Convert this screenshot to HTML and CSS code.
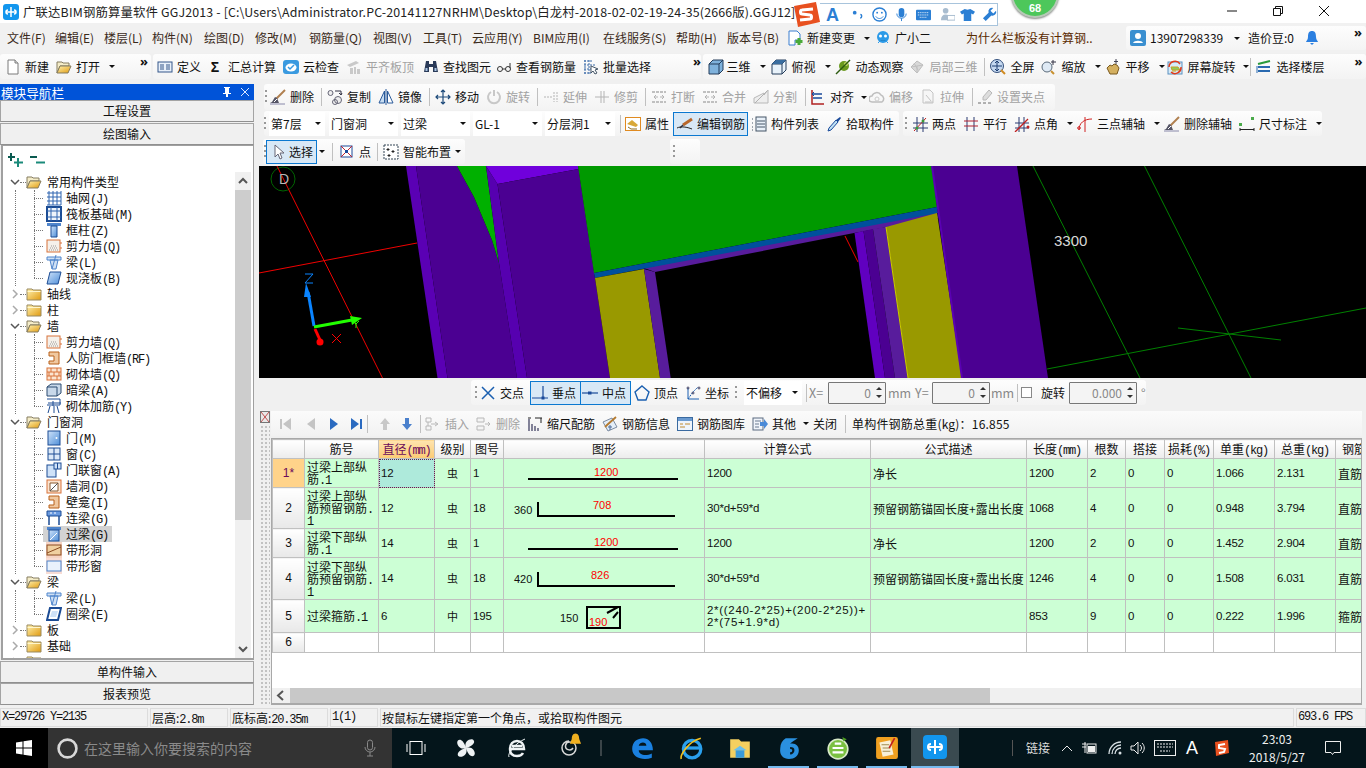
FILE: index.html
```html
<!DOCTYPE html>
<html lang="zh-CN">
<head>
<meta charset="utf-8">
<title>GGJ2013</title>
<link rel="stylesheet" href="styles.css">
</head>
<body>
<svg class="defs" width="0" height="0" aria-hidden="true">
<defs>
<linearGradient id="gf" x1="0" y1="0" x2="1" y2="1"><stop offset="0" stop-color="#fff2b0"/><stop offset="1" stop-color="#e09a10"/></linearGradient>
<linearGradient id="gb" x1="0" y1="0" x2="1" y2="1"><stop offset="0" stop-color="#cfe3fa"/><stop offset="1" stop-color="#4f8fd8"/></linearGradient>
<symbol id="doc" viewBox="0 0 16 16"><path d="M3 1h7l3 3v11H3z" fill="#fff" stroke="#7a7a7a"/><path d="M10 1v3h3" fill="#ddd" stroke="#7a7a7a"/></symbol>
<symbol id="fopen" viewBox="0 0 16 16"><path d="M1 3h5l1 1h6v3H4l-3 7z" fill="#f4ecc8" stroke="#857c60"/><path d="M4 7h11l-3 7H1z" fill="url(#gf)" stroke="#857c60"/></symbol>
<symbol id="fclosed" viewBox="0 0 16 16"><path d="M1 3h5l1 1h8v10H1z" fill="url(#gf)" stroke="#9a8a60"/><path d="M1.500 5.500h13" stroke="#fff6cc"/></symbol>
<symbol id="def" viewBox="0 0 16 16"><rect x="1" y="3" width="14" height="10" fill="#e8f0fa" stroke="#34578a"/><path d="M3 6h4M3 8h4M3 10h4M9 6h4M9 8h4M9 10h4" stroke="#34578a"/></symbol>
<symbol id="cloud" viewBox="0 0 16 16"><rect x="0" y="1" width="16" height="14" rx="3" fill="#3a9ae0"/><ellipse cx="8" cy="8.500" rx="5.500" ry="4" fill="#fff"/><path d="M5 8l2 2 4-4" stroke="#3a9ae0" stroke-width="1.500" fill="none"/></symbol>
<symbol id="plate" viewBox="0 0 16 16"><path d="M1 6l9-4 3 2-9 4zM4 9h3v6H4zM8 8h2v7H8zM11 10h3v5h-3z" fill="#c9c9c9"/></symbol>
<symbol id="binoc" viewBox="0 0 16 16"><path d="M3 2h3v3h4V2h3l2 11H10V8H6v5H1z" fill="#2a3a58"/><path d="M2.500 9h2v3h-2zM11.500 9h2v3h-2z" fill="#a8c4e4"/></symbol>
<symbol id="glass" viewBox="0 0 16 16"><circle cx="4" cy="10" r="2.500" fill="none" stroke="#333"/><circle cx="12" cy="10" r="2.500" fill="none" stroke="#333"/><path d="M6.500 10h3M14 9V4" stroke="#333"/></symbol>
<symbol id="batch" viewBox="0 0 16 16"><path d="M1 2h9M1 6h11M1 10h7M1 14h7M2 1v14M6 1v14" stroke="#3a6aa8" stroke-dasharray="2 1"/><path d="M8 7l7 3-3 1 2 3-2 1-2-3-2 2z" fill="#fff" stroke="#456"/></symbol>
<symbol id="cube" viewBox="0 0 16 16"><path d="M1 5l4-4h10v10l-4 4H1z" fill="#7fb2dc" stroke="#243d5a"/><path d="M1 5h10v10M11 5l4-4" fill="none" stroke="#243d5a"/></symbol>
<symbol id="cube2" viewBox="0 0 16 16"><path d="M1 5l4-4h10v10l-4 4H1z" fill="#e8f2fa" stroke="#243d5a"/><path d="M1 5h10v10M11 5l4-4" fill="none" stroke="#243d5a"/><path d="M5 1h10l-4 4H1z" fill="#3a6ea0"/></symbol>
<symbol id="orbit" viewBox="0 0 16 16"><circle cx="9" cy="7" r="5" fill="#6a9a20"/><circle cx="11" cy="5" r="2" fill="#c8d868"/><path d="M1 15L15 1" stroke="#2c5a10" stroke-width="1.500"/></symbol>
<symbol id="cubeg" viewBox="0 0 16 16"><path d="M8 2l6 4-6 8-6-6z" fill="#d8d8d8" stroke="#bdbdbd"/><path d="M2 8l6-1 6-1M8 7v7M5 4l4 7" stroke="#c0c0c0" fill="none"/></symbol>
<symbol id="full" viewBox="0 0 16 16"><circle cx="7" cy="7" r="6.500" fill="#c4d8f0" stroke="#33507c"/><path d="M7 2v10M2 7h10M5 4l2-2 2 2M5 10l2 2 2-2" stroke="#1d3d70" fill="none"/><path d="M11 11l4 4" stroke="#d08a20" stroke-width="2"/></symbol>
<symbol id="zoom" viewBox="0 0 16 16"><circle cx="6" cy="8" r="5" fill="#dfeaf5" stroke="#5a6a7a"/><path d="M10 12l3 3" stroke="#c89030" stroke-width="2"/><path d="M12 1v5M10 3h5" stroke="#334"/></symbol>
<symbol id="hand" viewBox="0 0 16 16"><path d="M2 9l3-3 2 1 2-2 3 1 2 3-2 6H5z" fill="#d4b060" stroke="#7a5a20"/><path d="M11 0v5M9 2.500h4" stroke="#445"/></symbol>
<symbol id="rot" viewBox="0 0 16 16"><rect x="1" y="3" width="14" height="12" fill="#d8ecf8" stroke="#5a90c0"/><path d="M4 8h7l2 3H5zM5 12h4" fill="#8ccc60" stroke="#caa020"/><path d="M2 8a6 6 0 0 1 11-3M14 8a6 6 0 0 1-10 5" fill="none" stroke="#e03a1a" stroke-width="1.500"/></symbol>
<symbol id="layer" viewBox="0 0 16 16"><path d="M2 5l12-3" stroke="#2a9a3a" stroke-width="2"/><path d="M2 8h12" stroke="#2a6ab0" stroke-width="2"/><path d="M2 12h12" stroke="#2a6ab0" stroke-width="2"/><path d="M1 7v7" stroke="#2a6ab0"/></symbol>
<symbol id="brush" viewBox="0 0 16 16"><path d="M15 1L6 10" stroke="#b08050" stroke-width="2"/><path d="M7 9l-2-1-3 5-2 1h9z" fill="#556" /><path d="M4 13l3-3" stroke="#fff"/><path d="M0 15h15" stroke="#88a"/></symbol>
<symbol id="copy" viewBox="0 0 16 16"><circle cx="3.500" cy="4" r="2.500" fill="#eee" stroke="#667"/><circle cx="11" cy="11" r="3.500" fill="#eee" stroke="#667"/><circle cx="8" cy="13" r="2.500" fill="none" stroke="#667"/><path d="M8 2h6v4M12 4l2 2 1-2" stroke="#334" fill="none"/></symbol>
<symbol id="mirror" viewBox="0 0 16 16"><path d="M6.500 2L1 14h5.500z" fill="#c8ddf2" stroke="#2a5a9a"/><path d="M9.500 2L15 14H9.500z" fill="#fff" stroke="#2a5a9a"/><path d="M8 0v16" stroke="#2a5a9a"/></symbol>
<symbol id="move" viewBox="0 0 16 16"><path d="M8 1v14M1 8h14M6 3l2-2 2 2M6 13l2 2 2-2M3 6L1 8l2 2M13 6l2 2-2 2" stroke="#1d4a7a" stroke-width="1.200" fill="none"/></symbol>
<symbol id="rotg" viewBox="0 0 16 16"><path d="M5 3a6 6 0 1 0 6 0" fill="none" stroke="#c8c8c8" stroke-width="2"/><path d="M8 1v6" stroke="#c8c8c8" stroke-width="2"/></symbol>
<symbol id="extg" viewBox="0 0 16 16"><path d="M1 8h8M11 3v10M14 3v10" stroke="#b4b4b4" stroke-dasharray="2 1"/></symbol>
<symbol id="trimg" viewBox="0 0 16 16"><path d="M1 8h14M7 2v12M10 2v12" stroke="#b4b4b4"/></symbol>
<symbol id="breakg" viewBox="0 0 16 16"><path d="M1 3h14M1 13h14" stroke="#c0c0c0" stroke-width="2" stroke-dasharray="3 1"/><path d="M3 8h4M9 8h4M5 6l-2 2 2 2M11 6l2 2-2 2" stroke="#b4b4b4" fill="none"/></symbol>
<symbol id="splitg" viewBox="0 0 16 16"><path d="M1 14V9l10-5v2l4-5v13z" fill="#eee" stroke="#b8b8b8"/><path d="M2 14L14 2" stroke="#b0b0b0"/></symbol>
<symbol id="align" viewBox="0 0 16 16"><path d="M2 1v14h12" stroke="#b02020" stroke-width="1.500" fill="none"/><path d="M3 5h9M3 9h9" stroke="#1a4a9a" stroke-width="1.500"/><path d="M4 3L2 5l2 2" stroke="#1a4a9a" fill="none"/></symbol>
<symbol id="offg" viewBox="0 0 16 16"><path d="M3 13a3 3 0 0 1 0-6 5 5 0 0 1 9-1 4 4 0 0 1 1 7z" fill="none" stroke="#bfbfbf" stroke-width="1.500"/><circle cx="8" cy="10" r="2" fill="none" stroke="#ccc"/></symbol>
<symbol id="stretchg" viewBox="0 0 16 16"><path d="M3 1h7l3 3v10H3z" fill="#f6f6f6" stroke="#c4c4c4"/><path d="M6 6l5 6M5 13h8" stroke="#c4c4c4"/></symbol>
<symbol id="gripg" viewBox="0 0 16 16"><path d="M12 1l3 3-6 7H6V8z" fill="#ddd" stroke="#b8b8b8"/><path d="M1 14h3M6 14h3M11 14h3" stroke="#b0b0b0" stroke-width="2"/></symbol>
<symbol id="attr" viewBox="0 0 16 16"><rect x="0.500" y="1.500" width="15" height="13" fill="#fff" stroke="#e08a20"/><path d="M2 8l5-4 6 5-2 2z" fill="#d8a838"/><path d="M3 11l3 2h6" stroke="#8a6a20" fill="none"/></symbol>
<symbol id="pen" viewBox="0 0 16 16"><path d="M15 3L6 9" stroke="#b8672a" stroke-width="3"/><path d="M6 9l-3 3" stroke="#334" stroke-width="1.500"/><path d="M0 12c4-2 10-1 15 1" stroke="#222" fill="none"/></symbol>
<symbol id="list" viewBox="0 0 16 16"><path d="M1 3h2M1 7h2M1 11h2M1 14h2" stroke="#456" stroke-dasharray="1 1"/><rect x="5" y="1" width="10" height="14" fill="#e8f0f8" stroke="#456"/><path d="M6 5h8M6 8h8M6 11h8" stroke="#456"/></symbol>
<symbol id="pick" viewBox="0 0 16 16"><path d="M14 1l1 1-3 4-2-2z" fill="#1a4a9a"/><path d="M10 4l2 2-7 8-3 1 1-3z" fill="#bfe0f4" stroke="#1a4a9a"/></symbol>
<symbol id="twop" viewBox="0 0 16 16"><path d="M1 7h15M1 12h15M5 1v15M11 1v15" stroke="#2a3a70"/><path d="M2 15L14 2" stroke="#c02020"/><circle cx="5" cy="12" r="1.500" fill="#3a9a3a"/><circle cx="11" cy="5" r="1.500" fill="#3a9a3a"/></symbol>
<symbol id="para" viewBox="0 0 16 16"><path d="M4 1v14M11 1v14" stroke="#2a3a70"/><path d="M1 5h14M1 10h14" stroke="#b02030"/></symbol>
<symbol id="angl" viewBox="0 0 16 16"><path d="M1 7h14M1 12h14M5 1v15M10 1v15" stroke="#2a3a70"/><path d="M1 16L14 3" stroke="#c02020" stroke-width="1.300"/><circle cx="14" cy="11" r="1.500" fill="#c02020"/></symbol>
<symbol id="threep" viewBox="0 0 16 16"><path d="M2 14c0-7 5-11 13-11M8 1v15" stroke="#d02020" fill="none"/><circle cx="2" cy="12" r="1.300" fill="none" stroke="#d02020"/></symbol>
<symbol id="dim" viewBox="0 0 16 16"><path d="M1 12v3M15 12v3M1 13.500h14" stroke="#222" fill="none"/><rect x="0" y="7" width="3" height="3" fill="#4aaa4a"/><rect x="12" y="1" width="3" height="3" fill="#4aaa4a"/><path d="M6 13.500h1M9 13.500h1" stroke="#222"/></symbol>
<symbol id="cursor" viewBox="0 0 16 16"><path d="M4 1v12l3-3 2 5 2-1-2-5h4z" fill="#fff" stroke="#667"/></symbol>
<symbol id="pt" viewBox="0 0 16 16"><rect x="2" y="2" width="11" height="11" fill="#fff" stroke="#1a4a9a"/><path d="M2 2l11 11M13 2L2 13" stroke="#c02030"/><rect x="6" y="6" width="3" height="3" fill="#1a4a9a"/></symbol>
<symbol id="smart" viewBox="0 0 16 16"><rect x="1" y="1" width="14" height="14" fill="#fff" stroke="#345" stroke-dasharray="2 1"/><path d="M5 4v3M3.500 5.500h3M10 6v3M8.500 7.500h3M6 10v3M4.500 11.500h3" stroke="#222"/></symbol>
<symbol id="cross" viewBox="0 0 16 16"><path d="M2 2l12 12M14 2L2 14" stroke="#1a5fb0" stroke-width="1.500"/></symbol>
<symbol id="perp" viewBox="0 0 16 16"><path d="M0 13h16M11 1v12" stroke="#1a4a9a" stroke-width="1.200"/><rect x="9.500" y="11.500" width="3" height="3" fill="#1a4a9a"/></symbol>
<symbol id="mid" viewBox="0 0 16 16"><path d="M0 8h16" stroke="#1a4a9a" stroke-width="1.200"/><rect x="6" y="6.500" width="3.500" height="3" fill="#1a4a9a"/></symbol>
<symbol id="vert" viewBox="0 0 16 16"><path d="M8 1l7 6-3 8H4L1 7z" fill="none" stroke="#1a5fb0" stroke-width="1.400"/></symbol>
<symbol id="coord" viewBox="0 0 16 16"><path d="M3 3v11h11" stroke="#1a5fb0" fill="none"/><path d="M3 14l5-7 5-5" stroke="#1a5fb0" stroke-dasharray="2 1" fill="none"/><circle cx="3" cy="3" r="1" fill="none" stroke="#446"/><circle cx="14" cy="3" r="1" fill="none" stroke="#446"/><circle cx="8" cy="8" r="1" fill="none" stroke="#446"/></symbol>
<symbol id="fst" viewBox="0 0 16 16"><path d="M3 3h2v10H3zM14 2v12L6 8z" fill="#c4c4c4"/></symbol>
<symbol id="prv" viewBox="0 0 16 16"><path d="M12 2v12L4 8z" fill="#c4c4c4"/></symbol>
<symbol id="nxt" viewBox="0 0 16 16"><path d="M4 2v12l8-6z" fill="#2a6ac0"/></symbol>
<symbol id="lst" viewBox="0 0 16 16"><path d="M2 2v12l8-6zM11 3h2v10h-2z" fill="#2a6ac0"/></symbol>
<symbol id="upg" viewBox="0 0 16 16"><path d="M8 2l5 6h-3v6H6V8H3z" fill="#c8c8c8"/></symbol>
<symbol id="dnb" viewBox="0 0 16 16"><path d="M8 14l5-6h-3V2H6v6H3z" fill="#4a80cc"/></symbol>
<symbol id="insg" viewBox="0 0 16 16"><path d="M1 2h5v4H1zM1 10h5v4H1z" fill="none" stroke="#b8b8b8"/><path d="M6 8h6M10 6l3 2-3 2M3 6v4" stroke="#b8b8b8" fill="none"/></symbol>
<symbol id="delg" viewBox="0 0 16 16"><path d="M1 2h7v4H1zM1 10h7v4H1z" fill="#f4f4f4" stroke="#b8b8b8"/><path d="M9 8h5M12 6l2 2-2 2" stroke="#b8b8b8" fill="none"/></symbol>
<symbol id="scale" viewBox="0 0 16 16"><path d="M2 3v12M5 8v7M8 10v5M11 12v3" stroke="#446" stroke-width="1.300"/><path d="M1 2h3M8 2h7M14 2v5" stroke="#222" fill="none"/></symbol>
<symbol id="info" viewBox="0 0 16 16"><path d="M1 6l9-4 5 9-9 4z" fill="#e4eef8" stroke="#7a8aa0"/><path d="M14 1L5 9l-2 2" stroke="#b47a30" stroke-width="1.800"/><path d="M8 9v5M6 11h4" stroke="#4a6a9a"/></symbol>
<symbol id="lib" viewBox="0 0 16 16"><rect x="0.500" y="1.500" width="15" height="13" fill="#eef4fb" stroke="#3a6aa0"/><rect x="1" y="2" width="14" height="3" fill="#6a9ad0"/><path d="M3 8h3M8 8h5M3 11h5" stroke="#c08a30"/></symbol>
<symbol id="other" viewBox="0 0 16 16"><rect x="1" y="2" width="10" height="12" fill="#f0f4fa" stroke="#5a6a80"/><path d="M3 5h6M3 8h4M3 11h4" stroke="#6a7a90"/><path d="M8 6h4V3l4 5-4 5v-3H8z" fill="#4a8ad8"/></symbol>
<symbol id="grid" viewBox="0 0 16 16"><path d="M1 3h14M1 7h14M1 11h14M1 15h14M3 1v14M7 1v14M11 1v14M15 1v14" stroke="#2f64b0"/></symbol>
<symbol id="raft" viewBox="0 0 16 16"><rect x="1" y="1" width="14" height="14" fill="#eef4fb" stroke="#1c4c94" stroke-width="2"/><path d="M1 5h14M1 11h14M5 1v14M11 1v14" stroke="#2f64b0"/></symbol>
<symbol id="colu" viewBox="0 0 16 16"><path d="M1 1h14v3H1z" fill="#4f85cc"/><path d="M5 4h6v11H5z" fill="url(#gb)" stroke="#1c4c94"/></symbol>
<symbol id="wall" viewBox="0 0 16 16"><rect x="1" y="2" width="13" height="12" fill="#f5f0ea" stroke="#d8733a"/><path d="M3 12h9M4 10h8M5 8h6" stroke="#999" stroke-dasharray="1 1"/><path d="M15 4v2M15 9v2" stroke="#d8733a"/></symbol>
<symbol id="beam" viewBox="0 0 16 16"><path d="M1 3h14v3H1zM4 6h8l-2 9H6z" fill="#cfe0f4" stroke="#4f85cc"/><path d="M10 1L6 15" stroke="#4f85cc"/></symbol>
<symbol id="slab" viewBox="0 0 16 16"><path d="M4 2h11l-3 12H1z" fill="url(#gb)" stroke="#1c4c94"/></symbol>
<symbol id="rfdoor" viewBox="0 0 16 16"><path d="M3 2h10v12H3v-3h5V6H3z" fill="#f0c8a0" stroke="#b8601a"/></symbol>
<symbol id="brick" viewBox="0 0 16 16"><rect x="1" y="2" width="14" height="12" fill="#fbe4d0" stroke="#d8733a"/><path d="M1 6h14M1 10h14M5 2v4M11 2v4M3 6v4M8 6v4M13 6v4M5 10v4M11 10v4" stroke="#d8733a"/></symbol>
<symbol id="hid" viewBox="0 0 16 16"><path d="M1 5l4-3h10v9l-4 3H1z" fill="#c8d8ea" stroke="#2a4a70"/><path d="M1 5h10v9" stroke="#2a4a70" fill="none"/></symbol>
<symbol id="rein" viewBox="0 0 16 16"><path d="M1 1h13v6H1" stroke="#1c4c94" fill="none"/><path d="M4 8l-2 7M8 8v7M11 8l2 7M2 5h13M7 3v5" stroke="#1c4c94"/></symbol>
<symbol id="door" viewBox="0 0 16 16"><rect x="2" y="1" width="12" height="14" fill="url(#gb)" stroke="#1c4c94"/><circle cx="10.500" cy="8" r="1" fill="#fff"/></symbol>
<symbol id="wind" viewBox="0 0 16 16"><rect x="2" y="2" width="12" height="12" fill="#dbe9f8" stroke="#1c4c94"/><path d="M8 2v12M2 8h12" stroke="#1c4c94"/></symbol>
<symbol id="doorw" viewBox="0 0 16 16"><rect x="1" y="3" width="9" height="12" fill="#cfe2f8" stroke="#1c4c94"/><rect x="8" y="1" width="7" height="6" fill="#cfe2f8" stroke="#1c4c94"/><path d="M11.500 1v6" stroke="#1c4c94"/></symbol>
<symbol id="hole" viewBox="0 0 16 16"><rect x="1" y="2" width="14" height="13" fill="#fbe4d0" stroke="#d8733a"/><path d="M4 5h8v8H4z" fill="#fff" stroke="#8a5a30"/><path d="M4 13l8-8" stroke="#555"/></symbol>
<symbol id="lian" viewBox="0 0 16 16"><path d="M1 1h14v5H1z" fill="#6a9ae0" stroke="#1c4c94"/><path d="M3 6v9M13 6v9" stroke="#1c4c94" stroke-width="1.500"/><path d="M4 3h2M8 3h2" stroke="#fff"/></symbol>
<symbol id="lint" viewBox="0 0 16 16"><rect x="1" y="1" width="14" height="3" fill="#4f85cc"/><rect x="3" y="4" width="10" height="11" fill="url(#gb)" stroke="#1c4c94"/><path d="M4 14l7-7" stroke="#fff"/></symbol>
<symbol id="stripd" viewBox="0 0 16 16"><rect x="0" y="0" width="16" height="16" fill="#f6d4c4"/><rect x="1" y="3" width="14" height="10" fill="#f0d0a0" stroke="#8a4a20"/><path d="M1 11l14-6" stroke="#8a4a20"/></symbol>
<symbol id="stripw" viewBox="0 0 16 16"><rect x="0" y="0" width="16" height="16" fill="#f8dcd4"/><rect x="1" y="3" width="14" height="10" fill="#eaf2fc" stroke="#4f85cc"/></symbol>
<symbol id="ring" viewBox="0 0 16 16"><path d="M4 2h11l-3 12H1z" fill="none" stroke="#1c4c94" stroke-width="2"/><path d="M6 5h6l-2 6H4z" fill="#cfe2f8"/></symbol>
</defs>
</svg>
<div class="app">
  <header class="title">
    <svg class="logo" viewBox="0 0 16 16"><rect width="16" height="16" rx="3" fill="#1296ee"/><path d="M8 3v10M3 8h10M5 6a2 2 0 1 0 0 4M11 6a2 2 0 1 1 0 4" stroke="#fff" stroke-width="1.500" fill="none"/></svg>
    <span class="title-text">广联达BIM钢筋算量软件 GGJ2013 - [C:\Users\Administrator.PC-20141127NRHM\Desktop\白龙村-2018-02-02-19-24-35(2666版).GGJ12]</span>
    <div class="sogou">
      <svg class="sg-logo" viewBox="0 0 27 25"><path d="M1 4L23 0l4 20-22 5z" fill="#e8501f"/><path d="M20 7L9 8c-2 0-2 4 0 4l8 1c2 0 2 4 0 4L7 18" stroke="#fff" stroke-width="3" fill="none"/></svg>
      <div class="sg-bar">
        <span class="sg-a">A</span>
        <svg class="sg-ic" viewBox="0 0 16 16"><circle cx="5" cy="6" r="2" fill="#2b7fd4"/><path d="M11 8c2 0 2 3 0 4" stroke="#2b7fd4" stroke-width="1.500" fill="none"/></svg>
        <svg class="sg-ic" viewBox="0 0 16 16"><circle cx="8" cy="8" r="7" fill="none" stroke="#2b7fd4" stroke-width="1.500"/><circle cx="5.500" cy="6" r="1" fill="#2b7fd4"/><circle cx="10.500" cy="6" r="1" fill="#2b7fd4"/><path d="M4 10c2 3 6 3 8 0" stroke="#2b7fd4" fill="none"/></svg>
        <svg class="sg-ic" viewBox="0 0 16 16"><rect x="5" y="1" width="6" height="10" rx="3" fill="#2b7fd4"/><path d="M3 7a5 5 0 0 0 10 0M8 12v3" stroke="#2b7fd4" fill="none"/></svg>
        <svg class="sg-ic" viewBox="0 0 16 16"><rect x="0" y="3" width="16" height="11" rx="1" fill="#2b7fd4"/><path d="M2 6h12M2 8.500h12M4 11h8" stroke="#fff" stroke-dasharray="1 1"/></svg>
        <svg class="sg-ic" viewBox="0 0 16 16"><circle cx="6" cy="4" r="3" fill="#a8bccf"/><path d="M1 14c0-4 2-6 5-6s4 2 4 6z" fill="#a8bccf"/><rect x="8" y="9" width="8" height="5" fill="#fff" stroke="#a8bccf"/></svg>
        <svg class="sg-ic" viewBox="0 0 16 16"><path d="M5 2l3 1 3-1 5 3-2 3-2-1v8H4V7L2 8 0 5z" fill="#2b7fd4"/></svg>
        <svg class="sg-ic" viewBox="0 0 16 16"><path d="M15 4l-3 3-3-3 3-3a4 4 0 0 0-5 5L1 12l3 3 6-6a4 4 0 0 0 5-5z" fill="#2b7fd4"/></svg>
      </div>
    </div>
    <div class="badge"><span class="badge-num">68</span></div>
    <div class="winctl">
      <svg viewBox="0 0 12 12"><path d="M1 6h10" stroke="#111"/></svg>
      <svg viewBox="0 0 12 12"><path d="M1.500 3.500h7v7h-7zM3.500 3.500v-2h7v7h-2" fill="none" stroke="#111"/></svg>
      <svg viewBox="0 0 12 12"><path d="M1 1l10 10M11 1L1 11" stroke="#111"/></svg>
    </div>
  </header>

  <nav class="menubar">
    <span>文件(F)</span><span>编辑(E)</span><span>楼层(L)</span><span>构件(N)</span><span>绘图(D)</span><span>修改(M)</span><span>钢筋量(Q)</span><span>视图(V)</span><span>工具(T)</span><span>云应用(Y)</span><span>BIM应用(I)</span><span>在线服务(S)</span><span>帮助(H)</span><span>版本号(B)</span>
    <div class="tool"><svg class="ic" viewBox="0 0 16 16"><path d="M2 1h8l3 3v6H8v5H2z" fill="#fff" stroke="#3a7fd0"/><path d="M12 8v7M8.500 11.500h7" stroke="#4aaa3a" stroke-width="3"/></svg><span>新建变更</span><i class="caret"></i></div>
    <div class="tool"><svg class="ic" viewBox="0 0 16 16"><circle cx="8" cy="7" r="6" fill="#2b9ae8"/><circle cx="5.500" cy="6" r="1.500" fill="#fff"/><circle cx="10.500" cy="6" r="1.500" fill="#fff"/><path d="M5 10c2 1 4 1 6 0M3 13l2-2M13 13l-2-2" stroke="#2b9ae8"/></svg><span>广小二</span></div>
    <span class="ask">为什么栏板没有计算钢..</span>
    <div class="acct">
      <svg class="ic" viewBox="0 0 16 16"><rect width="16" height="16" rx="2" fill="#3a8fd0"/><circle cx="8" cy="6" r="3" fill="#fff"/><path d="M3 13c1-3 9-3 10 0z" fill="#fff"/></svg>
      <span class="phone">13907298339</span><i class="caret"></i>
      <span class="beans">造价豆:0</span>
      <svg class="ic bell" viewBox="0 0 16 16"><path d="M8 1c3 0 4 2 4 6 0 3 2 4 2 5H2c0-1 2-2 2-5 0-4 1-6 4-6z" fill="#2b7fe0"/><path d="M6 13h4l-2 2z" fill="#2b7fe0"/></svg>
      <span class="more more-top">»</span>
    </div>
  </nav>

  <div class="toolbar1">
    <div class="tb-a tb-group">
      <div class="tool"><svg class="ic"><use href="#doc"/></svg><span>新建</span></div>
      <div class="tool"><svg class="ic"><use href="#fopen"/></svg><span>打开</span><i class="caret"></i></div>
      <span class="more">»</span>
    </div>
    <div class="tb-b tb-group">
      <div class="tool"><svg class="ic"><use href="#def"/></svg><span>定义</span></div>
      <div class="tool"><b class="sigma">Σ</b><span>汇总计算</span></div>
      <div class="tool"><svg class="ic"><use href="#cloud"/></svg><span>云检查</span></div>
      <div class="tool off"><svg class="ic"><use href="#plate"/></svg><span>平齐板顶</span></div>
      <div class="tool"><svg class="ic"><use href="#binoc"/></svg><span>查找图元</span></div>
      <div class="tool"><svg class="ic"><use href="#glass"/></svg><span>查看钢筋量</span></div>
      <div class="tool"><svg class="ic"><use href="#batch"/></svg><span>批量选择</span></div>
      <span class="more">»</span>
    </div>
    <div class="tb-c tb-group">
      <div class="tool tool-3d"><svg class="ic"><use href="#cube"/></svg><span>三维</span><i class="caret"></i></div>
      <div class="tool"><svg class="ic"><use href="#cube2"/></svg><span>俯视</span><i class="caret"></i></div>
      <div class="tool"><svg class="ic"><use href="#orbit"/></svg><span>动态观察</span></div>
      <div class="tool off"><svg class="ic"><use href="#cubeg"/></svg><span>局部三维</span></div>
      <i class="sep"></i>
      <div class="tool"><svg class="ic"><use href="#full"/></svg><span>全屏</span></div>
      <div class="tool"><svg class="ic"><use href="#zoom"/></svg><span>缩放</span><i class="caret"></i></div>
      <div class="tool"><svg class="ic"><use href="#hand"/></svg><span>平移</span><i class="caret"></i></div>
      <div class="tool"><svg class="ic"><use href="#rot"/></svg><span>屏幕旋转</span><i class="caret tight"></i></div>
      <i class="sep"></i>
      <div class="tool"><svg class="ic"><use href="#layer"/></svg><span>选择楼层</span></div>
      <span class="more">»</span>
    </div>
  </div>

  <div class="main">
    <aside class="side">
      <div class="side-head"><span class="side-title">模块导航栏</span>
        <svg class="pin" viewBox="0 0 12 12"><path d="M3 1h6v1H8v5h2v1H7v3H5V8H2V7h2V2H3z" fill="#fff"/></svg>
        <svg class="pin" viewBox="0 0 12 12"><path d="M2 2l8 8M10 2l-8 8" stroke="#dce8ff"/></svg>
      </div>
      <button class="side-btn">工程设置</button>
      <button class="side-btn gap">绘图输入</button>
      <div class="treebox">
        <div class="tree-tools">
          <svg class="tt" viewBox="0 0 16 16"><path d="M3 1v8M0 5h7" stroke="#0a5a50" stroke-width="2"/><path d="M10 6v9M6 10.500h9" stroke="#1a8a7a" stroke-width="2"/></svg>
          <svg class="tt" viewBox="0 0 16 16"><path d="M0 5h7" stroke="#0a5a50" stroke-width="2"/><path d="M6 10.500h9" stroke="#1a8a7a" stroke-width="2"/></svg>
        </div>
        <div class="tree-body">
          <div class="tree">
            <div class="tr"><svg class="chev" viewBox="0 0 10 10"><path d="M1 3l4 4 4-4" stroke="#555" stroke-width="1.500" fill="none"/></svg><i class="stub"></i><svg class="ic"><use href="#fopen"/></svg><span>常用构件类型</span></div>
            <div class="kids">
              <div class="kid"><div class="lbl"><svg class="ic"><use href="#grid"/></svg><span>轴网<span class="m">(J)</span></span></div></div>
              <div class="kid"><div class="lbl"><svg class="ic"><use href="#raft"/></svg><span>筏板基础<span class="m">(M)</span></span></div></div>
              <div class="kid"><div class="lbl"><svg class="ic"><use href="#colu"/></svg><span>框柱<span class="m">(Z)</span></span></div></div>
              <div class="kid"><div class="lbl"><svg class="ic"><use href="#wall"/></svg><span>剪力墙<span class="m">(Q)</span></span></div></div>
              <div class="kid"><div class="lbl"><svg class="ic"><use href="#beam"/></svg><span>梁<span class="m">(L)</span></span></div></div>
              <div class="kid"><div class="lbl"><svg class="ic"><use href="#slab"/></svg><span>现浇板<span class="m">(B)</span></span></div></div>
            </div>
            <div class="tr"><svg class="chev" viewBox="0 0 10 10"><path d="M3 1l4 4-4 4" stroke="#aaa" stroke-width="1.500" fill="none"/></svg><i class="stub"></i><svg class="ic"><use href="#fclosed"/></svg><span>轴线</span></div>
            <div class="tr"><svg class="chev" viewBox="0 0 10 10"><path d="M3 1l4 4-4 4" stroke="#aaa" stroke-width="1.500" fill="none"/></svg><i class="stub"></i><svg class="ic"><use href="#fclosed"/></svg><span>柱</span></div>
            <div class="tr"><svg class="chev" viewBox="0 0 10 10"><path d="M1 3l4 4 4-4" stroke="#555" stroke-width="1.500" fill="none"/></svg><i class="stub"></i><svg class="ic"><use href="#fopen"/></svg><span>墙</span></div>
            <div class="kids">
              <div class="kid"><div class="lbl"><svg class="ic"><use href="#wall"/></svg><span>剪力墙<span class="m">(Q)</span></span></div></div>
              <div class="kid"><div class="lbl"><svg class="ic"><use href="#rfdoor"/></svg><span>人防门框墙<span class="m">(RF)</span></span></div></div>
              <div class="kid"><div class="lbl"><svg class="ic"><use href="#brick"/></svg><span>砌体墙<span class="m">(Q)</span></span></div></div>
              <div class="kid"><div class="lbl"><svg class="ic"><use href="#hid"/></svg><span>暗梁<span class="m">(A)</span></span></div></div>
              <div class="kid"><div class="lbl"><svg class="ic"><use href="#rein"/></svg><span>砌体加筋<span class="m">(Y)</span></span></div></div>
            </div>
            <div class="tr"><svg class="chev" viewBox="0 0 10 10"><path d="M1 3l4 4 4-4" stroke="#555" stroke-width="1.500" fill="none"/></svg><i class="stub"></i><svg class="ic"><use href="#fopen"/></svg><span>门窗洞</span></div>
            <div class="kids">
              <div class="kid"><div class="lbl"><svg class="ic"><use href="#door"/></svg><span>门<span class="m">(M)</span></span></div></div>
              <div class="kid"><div class="lbl"><svg class="ic"><use href="#wind"/></svg><span>窗<span class="m">(C)</span></span></div></div>
              <div class="kid"><div class="lbl"><svg class="ic"><use href="#doorw"/></svg><span>门联窗<span class="m">(A)</span></span></div></div>
              <div class="kid"><div class="lbl"><svg class="ic"><use href="#hole"/></svg><span>墙洞<span class="m">(D)</span></span></div></div>
              <div class="kid"><div class="lbl"><svg class="ic"><use href="#rfdoor"/></svg><span>壁龛<span class="m">(I)</span></span></div></div>
              <div class="kid"><div class="lbl"><svg class="ic"><use href="#lian"/></svg><span>连梁<span class="m">(G)</span></span></div></div>
              <div class="kid sel"><div class="lbl"><svg class="ic"><use href="#lint"/></svg><span>过梁<span class="m">(G)</span></span></div></div>
              <div class="kid"><div class="lbl"><svg class="ic"><use href="#stripd"/></svg><span>带形洞</span></div></div>
              <div class="kid"><div class="lbl"><svg class="ic"><use href="#stripw"/></svg><span>带形窗</span></div></div>
            </div>
            <div class="tr"><svg class="chev" viewBox="0 0 10 10"><path d="M1 3l4 4 4-4" stroke="#555" stroke-width="1.500" fill="none"/></svg><i class="stub"></i><svg class="ic"><use href="#fopen"/></svg><span>梁</span></div>
            <div class="kids">
              <div class="kid"><div class="lbl"><svg class="ic"><use href="#beam"/></svg><span>梁<span class="m">(L)</span></span></div></div>
              <div class="kid"><div class="lbl"><svg class="ic"><use href="#ring"/></svg><span>圈梁<span class="m">(E)</span></span></div></div>
            </div>
            <div class="tr"><svg class="chev" viewBox="0 0 10 10"><path d="M3 1l4 4-4 4" stroke="#aaa" stroke-width="1.500" fill="none"/></svg><i class="stub"></i><svg class="ic"><use href="#fclosed"/></svg><span>板</span></div>
            <div class="tr"><svg class="chev" viewBox="0 0 10 10"><path d="M3 1l4 4-4 4" stroke="#aaa" stroke-width="1.500" fill="none"/></svg><i class="stub"></i><svg class="ic"><use href="#fclosed"/></svg><span>基础</span></div>
            <div class="tr tr-last"><svg class="chev" viewBox="0 0 10 10"><path d="M3 1l4 4-4 4" stroke="#aaa" stroke-width="1.500" fill="none"/></svg><i class="stub"></i><svg class="ic"><use href="#fclosed"/></svg></div>
          </div>
          <div class="vscroll">
            <svg class="vs-arrow" viewBox="0 0 16 18"><path d="M4 11l4-4 4 4" stroke="#555" stroke-width="2" fill="none"/></svg>
            <div class="vs-track"><div class="vs-thumb"></div></div>
            <svg class="vs-arrow" viewBox="0 0 16 18"><path d="M4 7l4 4 4-4" stroke="#555" stroke-width="2" fill="none"/></svg>
          </div>
        </div>
      </div>
      <button class="side-btn top1">单构件输入</button>
      <button class="side-btn">报表预览</button>
    </aside>

    <section class="work">
      <div class="row2 tb-group">
        <i class="grip"></i>
        <div class="tool"><svg class="ic"><use href="#brush"/></svg><span>删除</span></div>
        <i class="sep"></i>
        <div class="tool"><svg class="ic"><use href="#copy"/></svg><span>复制</span></div>
        <div class="tool"><svg class="ic"><use href="#mirror"/></svg><span>镜像</span></div>
        <i class="sep"></i>
        <div class="tool"><svg class="ic"><use href="#move"/></svg><span>移动</span></div>
        <div class="tool off"><svg class="ic"><use href="#rotg"/></svg><span>旋转</span></div>
        <i class="sep"></i>
        <div class="tool off"><svg class="ic"><use href="#extg"/></svg><span>延伸</span></div>
        <div class="tool off"><svg class="ic"><use href="#trimg"/></svg><span>修剪</span></div>
        <i class="sep"></i>
        <div class="tool off"><svg class="ic"><use href="#breakg"/></svg><span>打断</span></div>
        <div class="tool off"><svg class="ic"><use href="#breakg"/></svg><span>合并</span></div>
        <div class="tool off"><svg class="ic"><use href="#splitg"/></svg><span>分割</span></div>
        <i class="sep"></i>
        <div class="tool"><svg class="ic"><use href="#align"/></svg><span>对齐</span><i class="caret tight"></i></div>
        <div class="tool off"><svg class="ic"><use href="#offg"/></svg><span>偏移</span></div>
        <div class="tool off"><svg class="ic"><use href="#stretchg"/></svg><span>拉伸</span></div>
        <i class="sep"></i>
        <div class="tool off"><svg class="ic"><use href="#gripg"/></svg><span>设置夹点</span></div>
      </div>
      <div class="row3">
        <div class="r3a tb-group">
          <i class="grip"></i>
          <div class="sel-box w56"><span>第7层</span><i class="caret"></i></div>
          <div class="sel-box"><span>门窗洞</span><i class="caret"></i></div>
          <div class="sel-box"><span>过梁</span><i class="caret"></i></div>
          <div class="sel-box"><span>GL-1</span><i class="caret"></i></div>
          <div class="sel-box w70"><span>分层洞1</span><i class="caret"></i></div>
          <i class="sep"></i>
          <div class="tool"><svg class="ic"><use href="#attr"/></svg><span>属性</span></div>
          <div class="tool active"><svg class="ic"><use href="#pen"/></svg><span>编辑钢筋</span></div>
          <div class="tool"><svg class="ic"><use href="#list"/></svg><span>构件列表</span></div>
          <div class="tool"><svg class="ic"><use href="#pick"/></svg><span>拾取构件</span></div>
        </div>
        <div class="r3b tb-group">
          <i class="grip"></i>
          <div class="tool"><svg class="ic"><use href="#twop"/></svg><span>两点</span></div>
          <div class="tool"><svg class="ic"><use href="#para"/></svg><span>平行</span></div>
          <div class="tool"><svg class="ic"><use href="#angl"/></svg><span>点角</span><i class="caret"></i></div>
          <div class="tool"><svg class="ic"><use href="#threep"/></svg><span>三点辅轴</span><i class="caret"></i></div>
          <div class="tool"><svg class="ic"><use href="#brush"/></svg><span>删除辅轴</span></div>
          <div class="tool"><svg class="ic"><use href="#dim"/></svg><span>尺寸标注</span><i class="caret"></i></div>
        </div>
      </div>
      <div class="row4">
        <div class="r4a tb-group">
          <i class="grip"></i>
          <div class="tool active sel-tool"><svg class="ic"><use href="#cursor"/></svg><span>选择</span></div>
          <i class="caret"></i>
          <i class="sep"></i>
          <div class="tool"><svg class="ic"><use href="#pt"/></svg><span>点</span></div>
          <i class="sep"></i>
          <div class="tool"><svg class="ic"><use href="#smart"/></svg><span>智能布置</span><i class="caret tight"></i></div>
        </div>
        <div class="r4b tb-group"><i class="grip"></i></div>
      </div>

      <svg class="scene" viewBox="259 166 1107 212" width="1107" height="212" role="img">
        <rect x="259" y="166" width="1107" height="212" fill="#000"/>
        <circle cx="283" cy="179" r="12" fill="none" stroke="#006400"/>
        <path d="M277 166L382.500 378M259 273L417 243M845 236L858 262" stroke="#f00200" fill="none"/>
        <path d="M1033 166L1140 378M1144.500 166L1251 378M1047 369L1366 308M1178 328L1281 340" stroke="#008000" fill="none"/>
        <text x="279" y="184" class="scene-d">D</text>
        <text x="1054" y="246" class="scene-num">3300</text>
        <polygon points="406,166 416,166 447.500,378 437.500,378" fill="#5a00b4"/>
        <polygon points="416,166 457,166 474,197 492,240 499,263 517,378 447.500,378" fill="#4b0092"/>
        <polygon points="457,166 486,166 499,263 492,240 474,197" fill="#00b000"/>
        <polygon points="486,166 497.500,184 527,378 517,378 499,263" fill="#5600b0"/>
        <polygon points="486,166 578,166 578.600,169 497.500,184" fill="#7000dc"/>
        <polygon points="497.500,184 578.600,169 610,378 527,378" fill="#4b0092"/>
        <polygon points="578,166 932,166 937,207 594,273" fill="#009900"/>
        <polygon points="644,268 937,212 938,218 854,233 655,272" fill="#581c9c"/>
        <polygon points="594,273 937,207 938,213 595,278" fill="#00509c"/>
        <polygon points="595,278 644,269 660,378 610,378" fill="#999900"/>
        <polygon points="644,269 655,272 670.700,378 660,378" fill="#581c9c"/>
        <polygon points="854.500,233 863.500,231 885,378 875,378" fill="#6000c0"/>
        <polygon points="863.500,231 873,229 895,378 885,378" fill="#4b0092"/>
        <polygon points="873,229 886,227 908,378 895,378" fill="#581c9c"/>
        <polygon points="886,227 937,213 962,378 908,378" fill="#999900"/>
        <path d="M886 227L908 378" stroke="#cccc00" fill="none"/>
        <polygon points="932,166 1017,166 1048,378 962,378" fill="#4b0092"/>
        <path d="M932 166L962 378" stroke="#5a00b4" stroke-width="2" fill="none"/>
        <path d="M314 326L308 292" stroke="#0a84ff" stroke-width="3"/>
        <polygon points="306,283 311,297 304,297" fill="#0a84ff"/>
        <path d="M305 274h8l-8 9h8" stroke="#0a84ff" fill="none"/>
        <path d="M314 327L352 320" stroke="#22ff00" stroke-width="3"/>
        <polygon points="362,318 350,316 352,325" fill="#22ff00"/>
        <path d="M353 321l3 3v4M359 321l-3 3" stroke="#22ff00" fill="none"/>
        <path d="M315 329L320 340" stroke="#f00" stroke-width="3"/>
        <circle cx="320" cy="342" r="3.500" fill="#f00"/>
        <path d="M332 334l9 9M341 334l-9 9" stroke="#f00" fill="none"/>
      </svg>

      <div class="snapbar">
        <div class="snap tb-group">
          <i class="grip"></i>
          <div class="tool"><svg class="ic"><use href="#cross"/></svg><span>交点</span></div>
          <div class="tool active"><svg class="ic"><use href="#perp"/></svg><span>垂点</span></div>
          <div class="tool active"><svg class="ic"><use href="#mid"/></svg><span>中点</span></div>
          <i class="blank"></i>
          <div class="tool"><svg class="ic"><use href="#vert"/></svg><span>顶点</span></div>
          <div class="tool"><svg class="ic"><use href="#coord"/></svg><span>坐标</span></div>
          <i class="grip"></i>
          <div class="sel-box w58"><span>不偏移</span><i class="caret"></i></div>
          <i class="sep"></i>
          <span class="lab">X=</span>
          <div class="spin w58"><span>0</span><div class="spin-b"><i class="up"></i><i class="dn"></i></div></div>
          <span class="lab">mm</span>
          <span class="lab">Y=</span>
          <div class="spin w58"><span>0</span><div class="spin-b"><i class="up"></i><i class="dn"></i></div></div>
          <span class="lab">mm</span>
          <i class="sep"></i>
          <i class="check"></i>
          <span class="txt">旋转</span>
          <div class="spin w68"><span>0.000</span><div class="spin-b"><i class="up"></i><i class="dn"></i></div></div>
          <span class="lab">°</span>
        </div>
      </div>

      <div class="panel">
        <div class="dots">
          <svg class="dots-x" viewBox="0 0 10 12"><rect x=".5" y=".5" width="9" height="11" fill="#e8e8e8" stroke="#777"/><path d="M1 1l8 10M9 1L1 11" stroke="#c05050"/></svg>
        </div>
        <div class="pane">
          <div class="editbar">
            <svg class="ic"><use href="#fst"/></svg>
            <svg class="ic"><use href="#prv"/></svg>
            <svg class="ic"><use href="#nxt"/></svg>
            <svg class="ic"><use href="#lst"/></svg>
            <i class="sep"></i>
            <svg class="ic"><use href="#upg"/></svg>
            <svg class="ic"><use href="#dnb"/></svg>
            <i class="sep"></i>
            <div class="tool off"><svg class="ic"><use href="#insg"/></svg><span>插入</span></div>
            <div class="tool off"><svg class="ic"><use href="#delg"/></svg><span>删除</span></div>
            <div class="tool"><svg class="ic"><use href="#scale"/></svg><span>缩尺配筋</span></div>
            <div class="tool"><svg class="ic"><use href="#info"/></svg><span>钢筋信息</span></div>
            <div class="tool"><svg class="ic"><use href="#lib"/></svg><span>钢筋图库</span></div>
            <div class="tool"><svg class="ic"><use href="#other"/></svg><span>其他</span><i class="caret tight"></i></div>
            <span class="txt">关闭</span>
            <i class="sep"></i>
            <span class="txt total">单构件钢筋总重(kg)：16.855</span>
          </div>
          <div class="grid-box">
            <div class="table-wrap">
              <table class="rebar">
                <colgroup>
                  <col class="c-h"><col class="c-name"><col class="c-d"><col class="c-lv"><col class="c-no"><col class="c-fig"><col class="c-f"><col class="c-desc"><col class="c-len"><col class="c-cnt"><col class="c-lap"><col class="c-loss"><col class="c-w"><col class="c-w2"><col class="c-t">
                </colgroup>
                <thead>
                  <tr>
                    <th></th><th>筋号</th><th class="hot">直径<span class="m">(mm)</span></th><th>级别</th><th>图号</th><th>图形</th><th>计算公式</th><th>公式描述</th><th>长度<span class="m">(mm)</span></th><th>根数</th><th>搭接</th><th>损耗<span class="m">(%)</span></th><th>单重<span class="m">(kg)</span></th><th>总重<span class="m">(kg)</span></th><th class="cut">钢筋</th>
                  </tr>
                </thead>
                <tbody>
                  <tr class="r29">
                    <th class="cur">1*</th><td class="nm">过梁上部纵筋<span class="m">.1</span></td><td class="num bl focus">12</td><td class="ctr">虫</td><td class="num">1</td>
                    <td class="fig"><svg class="figs" viewBox="0 0 200 28"><path d="M24 20h150" class="bar"/><text x="90" y="17" class="rd">1200</text></svg></td>
                    <td class="num">1200</td><td>净长</td><td class="num">1200</td><td class="num">2</td><td class="num">0</td><td class="num">0</td><td class="num">1.066</td><td class="num">2.131</td><td class="cut">直筋</td>
                  </tr>
                  <tr class="r41">
                    <th>2</th><td class="nm">过梁上部纵筋预留钢筋<span class="m">.1</span></td><td class="num bl">12</td><td class="ctr">虫</td><td class="num">18</td>
                    <td class="fig"><svg class="figs" viewBox="0 0 200 40"><path d="M34 14v14h137" class="bar"/><text x="10" y="26" class="bk">360</text><text x="89" y="21" class="rd">708</text></svg></td>
                    <td class="num">30*d+59*d</td><td>预留钢筋锚固长度+露出长度</td><td class="num">1068</td><td class="num">4</td><td class="num">0</td><td class="num">0</td><td class="num">0.948</td><td class="num">3.794</td><td class="cut">直筋</td>
                  </tr>
                  <tr class="r29">
                    <th>3</th><td class="nm">过梁下部纵筋<span class="m">.1</span></td><td class="num bl">14</td><td class="ctr">虫</td><td class="num">1</td>
                    <td class="fig"><svg class="figs" viewBox="0 0 200 28"><path d="M24 20h150" class="bar"/><text x="90" y="17" class="rd">1200</text></svg></td>
                    <td class="num">1200</td><td>净长</td><td class="num">1200</td><td class="num">2</td><td class="num">0</td><td class="num">0</td><td class="num">1.452</td><td class="num">2.904</td><td class="cut">直筋</td>
                  </tr>
                  <tr class="r42">
                    <th>4</th><td class="nm">过梁下部纵筋预留钢筋<span class="m">.1</span></td><td class="num bl">14</td><td class="ctr">虫</td><td class="num">18</td>
                    <td class="fig"><svg class="figs" viewBox="0 0 200 41"><path d="M34 14v14h137" class="bar"/><text x="10" y="25" class="bk">420</text><text x="87" y="21" class="rd">826</text></svg></td>
                    <td class="num">30*d+59*d</td><td>预留钢筋锚固长度+露出长度</td><td class="num">1246</td><td class="num">4</td><td class="num">0</td><td class="num">0</td><td class="num">1.508</td><td class="num">6.031</td><td class="cut">直筋</td>
                  </tr>
                  <tr class="r33">
                    <th>5</th><td class="nm">过梁箍筋<span class="m">.1</span></td><td class="num bl">6</td><td class="ctr">中</td><td class="num">195</td>
                    <td class="fig"><svg class="figs" viewBox="0 0 200 32"><path d="M83 7h33v21H83zM103 13l11-6M109 18l5-6" class="bar"/><text x="56" y="22" class="bk">150</text><text x="85" y="26" class="rd">190</text></svg></td>
                    <td class="num tight-l">2*((240-2*25)+(200-2*25))+<br>2*(75+1.9*d)</td><td></td><td class="num">853</td><td class="num">9</td><td class="num">0</td><td class="num">0</td><td class="num">0.222</td><td class="num">1.996</td><td class="cut">箍筋</td>
                  </tr>
                  <tr class="r20 blank-row">
                    <th>6</th><td></td><td class="bl"></td><td></td><td></td><td></td><td></td><td></td><td></td><td></td><td></td><td></td><td></td><td></td><td></td>
                  </tr>
                </tbody>
              </table>
            </div>
            <div class="hscroll">
              <svg class="hs-arrow" viewBox="0 0 18 15"><path d="M11 3L6 7.500 11 12" stroke="#555" stroke-width="2" fill="none"/></svg>
              <div class="hs-thumb"></div>
            </div>
          </div>
        </div>
      </div>
    </section>
  </div>

  <footer class="status">
    <div class="m-cell">X=29726 Y=2135</div>
    <div>层高:<span class="m">2.8m</span></div>
    <div>底标高:<span class="m">20.35m</span></div>
    <div class="m-cell">1(1)</div>
    <div>按鼠标左键指定第一个角点，或拾取构件图元</div>
    <div class="m-cell">693.6 FPS</div>
  </footer>

  <div class="taskbar">
    <div class="tk-start"><svg viewBox="0 0 16 16" class="tk16"><path d="M0 2.500l6.500-1v6H0zM7.500 1.300L16 0v7.500H7.500zM0 8.500h6.500v6l-6.500-1zM7.500 8.500H16V16l-8.500-1.300z" fill="#fff"/></svg></div>
    <div class="tk-search">
      <svg viewBox="0 0 20 20" class="tk-cortana"><circle cx="10" cy="10" r="8.500" fill="none" stroke="#d8d8d8" stroke-width="2.500"/></svg>
      <span class="tk-ph">在这里输入你要搜索的内容</span>
      <svg viewBox="0 0 14 18" class="tk-mic"><rect x="4.500" y="1" width="5" height="10" rx="2.500" fill="none" stroke="#8a8a8a"/><path d="M2 8a5 5 0 0 0 10 0M7 13v4M4 17h6" stroke="#8a8a8a" fill="none"/></svg>
    </div>
    <div class="tk-app"><svg viewBox="0 0 20 16" class="tk20"><rect x="4" y="1.500" width="12" height="13" fill="none" stroke="#fff"/><path d="M1 4v8M19 4v8" stroke="#fff"/></svg></div>
    <div class="tk-app"><svg viewBox="0 0 20 20" class="tk22"><path d="M10 10C5 12 2 8 2 5s5-5 8 5zM10 10c-2-5 2-8 5-8s5 5-5 8zM10 10c5-2 8 2 8 5s-5 5-8-5zM10 10c2 5-2 8-5 8s-5-5 5-8z" fill="#eef2f4"/></svg></div>
    <div class="tk-app"><svg viewBox="0 0 22 22" class="tk22"><path d="M5 12h13c0-5-3-8-7-8s-7 3-7 8 3 7 7 7c3 0 5-1 6-3M6 9h10" stroke="#f0f4f6" stroke-width="2.500" fill="none"/><path d="M3 20c-2-3 6-14 16-18" stroke="#f0f4f6" fill="none"/></svg></div>
    <div class="tk-app tk-bell-cell"><svg viewBox="0 0 22 22" class="tk22"><path d="M11 4a7 7 0 1 0 7 7c0-4-3-6-6-6a4 4 0 1 0 3 6" stroke="#d8d8d8" stroke-width="1.500" fill="none"/></svg><svg viewBox="0 0 14 14" class="tk-bell"><path d="M7 0c3 0 4 3 4 6l2 5H1l2-5c0-3 1-6 4-6z" fill="#f0b020"/></svg></div>
    <div class="tk-sep"><i></i></div>
    <div class="tk-app"><svg viewBox="0 0 22 22" class="tk24"><path d="M2 12C2 5 7 2 12 2s9 4 9 11H8c0 4 6 6 12 3v4c-8 3-18 0-18-8zM8 9h7c0-4-6-4-7 0z" fill="#1a80e0"/></svg></div>
    <div class="tk-app"><svg viewBox="0 0 22 22" class="tk24"><circle cx="12" cy="12" r="8" fill="none" stroke="#2aa0ee" stroke-width="3"/><path d="M5 11h15" stroke="#2aa0ee" stroke-width="3"/><path d="M2 21c-1-3 6-16 18-19" stroke="#f2c020" stroke-width="1.500" fill="none"/></svg></div>
    <div class="tk-app"><svg viewBox="0 0 22 22" class="tk24"><path d="M2 3h8l2 2h8v15H2z" fill="#f4d060"/><path d="M7 13h8v7H7z" fill="#3a9ad8"/><path d="M5 13l6-4 6 4z" fill="#6ac0ee"/></svg></div>
    <div class="tk-app tk-run"><svg viewBox="0 0 22 22" class="tk24"><path d="M8 2h11c-3 2-5 3-7 5 5-1 8 2 8 6 0 5-4 8-9 8s-9-3-8-10C3 7 5 4 8 2z" fill="#2a90e0"/><path d="M12 11c2 0 3 1 3 2s-1 3-3 3" stroke="#0a1a20" stroke-width="2" fill="none"/></svg></div>
    <div class="tk-app tk-run"><svg viewBox="0 0 22 22" class="tk24"><circle cx="11" cy="12" r="9" fill="#7ac040" stroke="#d8eac8" stroke-width="1.500"/><path d="M6 11h10M6 15h10M8 7h6" stroke="#fff" stroke-width="2"/><path d="M15 1l4 2-3 2" fill="#4a9a20"/></svg></div>
    <div class="tk-app tk-run"><svg viewBox="0 0 22 22" class="tk24"><rect x="1" y="1" width="20" height="20" rx="2" fill="#f0a020"/><path d="M4 6l10-2 3 13-10 2z" fill="#f8f0d8"/><path d="M6 8h7M7 11h7M7 14h7" stroke="#a08a50"/><path d="M18 2l-5 9" stroke="#c02020" stroke-width="1.500"/></svg></div>
    <div class="tk-app tk-active"><svg viewBox="0 0 24 24" class="tk24"><rect width="24" height="24" rx="4" fill="#1296ee"/><path d="M12 5v14M5 12h14M8 9a3 3 0 1 0 0 6M16 9a3 3 0 1 1 0 6" stroke="#fff" stroke-width="2" fill="none"/></svg></div>
    <div class="tk-tray">
      <i class="tk-tsep"></i>
      <span class="tk-link">链接</span>
      <svg viewBox="0 0 12 8" class="t12"><path d="M1 7l5-5 5 5" stroke="#e8e8e8" fill="none"/></svg>
      <svg viewBox="0 0 16 14" class="t16"><path d="M0 3h4M0 6h4" stroke="#eee"/><rect x="5" y="3" width="9" height="9" fill="none" stroke="#eee"/><rect x="6" y="5" width="7" height="6" fill="#eee"/><path d="M3 1v11" stroke="#eee"/></svg>
      <svg viewBox="0 0 16 14" class="t16"><path d="M1 13a12 12 0 0 1 12-12M4 13a9 9 0 0 1 9-9M7 13a6 6 0 0 1 6-6" stroke="#d8e0e4" stroke-width="1.300" fill="none"/><circle cx="12" cy="12" r="1.500" fill="#d8e0e4"/></svg>
      <svg viewBox="0 0 16 14" class="t16"><path d="M1 5h3l4-4v12l-4-4H1z" fill="none" stroke="#eee"/><path d="M10 4c2 2 2 4 0 6M12 2c3 3 3 7 0 10" stroke="#eee" fill="none"/></svg>
      <svg viewBox="0 0 22 16" class="t22"><rect x=".5" y=".5" width="21" height="15" fill="none" stroke="#eee"/><path d="M3 4h16M3 7h16M6 11h10" stroke="#eee" stroke-dasharray="2 1"/></svg>
      <span class="tk-a">A</span>
      <svg viewBox="0 0 16 18" class="t16 t-s"><path d="M1 3l13-2 1 13-13 3z" fill="#e8501f"/><path d="M11 5l-6 1 0 3 6 1-1 3-5 1" stroke="#fff" stroke-width="2" fill="none"/></svg>
      <div class="tk-clock"><span>23:03</span><span>2018/5/27</span></div>
      <svg viewBox="0 0 16 16" class="t16 t-n"><path d="M.5 1.500h15v11H9l-1.500 2-1.500-2H.5z" fill="none" stroke="#eee"/></svg>
    </div>
  </div>
</div>
</body>
</html>
```
FILE: styles.css
```css
* { box-sizing: border-box; }
html, body { margin: 0; padding: 0; }
body { width: 1366px; height: 768px; overflow: hidden; font: 12px/16px "Noto Sans CJK SC", sans-serif; color: #111; background: #f0f0f0; }
.defs { position: absolute; }
i { display: block; font-style: normal; }
svg { display: block; flex: none; }
.app { width: 1366px; height: 768px; display: flex; flex-direction: column; overflow: hidden; position: relative; }
.ic { width: 16px; height: 16px; }
.m { font: 12px/12px "Liberation Mono", monospace; letter-spacing: -1.2px; }

.tool { display: flex; align-items: center; gap: 4px; white-space: nowrap; height: 24px; }
.tool.off { color: #a2a2a2; }
.tool.active { background: #d8e8f6; border: 1px solid #0b78d0; }
.caret { width: 0; height: 0; border: 3px solid transparent; border-top: 3px solid #111; border-bottom: 0; margin-left: 5px; flex: none; }
.caret.tight { margin-left: 3px; }
.sep { width: 1px; height: 18px; background: #c0c0c0; align-self: center; }
.more { font: 700 13px/12px "Noto Sans", sans-serif; align-self: start; margin-top: 1px; }
.grip { width: 2px; height: 14px; align-self: center; background: repeating-linear-gradient(#999 0 2px, transparent 2px 5px); }
.tb-group { background: linear-gradient(#fdfdfd, #f3f3f3); border-radius: 3px; }

/* title */
.title { height: 23px; background: #fff; display: flex; align-items: center; padding-left: 3px; position: relative; }
.logo { width: 16px; height: 16px; }
.title-text { font-size: 12.4px; margin-left: 4px; white-space: nowrap; letter-spacing: .15px; color: #222; }
.sogou { position: absolute; left: 793px; top: 2px; display: flex; }
.sg-logo { width: 27px; height: 25px; }
.sg-bar { width: 178px; height: 23px; margin-top: 1px; background: #fff; border: 1px solid #a8c4dc; border-left: 0; display: grid; grid-template-columns: 24px 22px 22px 22px 24px 20px 22px 20px; align-items: center; padding-left: 6px; }
.sg-a { font: 700 18px/20px "Liberation Sans", sans-serif; color: #2b7fd4; }
.sg-ic { width: 15px; height: 15px; }
.badge { position: absolute; left: 1011px; top: -30px; width: 48px; height: 48px; border-radius: 50%; background: #4dc75b; border: 2px solid #b8c8b8; box-shadow: 0 1px 2px #888; display: flex; align-items: flex-end; justify-content: center; }
.badge-num { font: 700 11px/16px "Liberation Sans", sans-serif; color: #fff; }
.winctl { position: absolute; right: 19px; top: 5px; display: grid; grid-template-columns: repeat(3, 46px); justify-items: center; }
.winctl svg { width: 12px; height: 12px; }

/* menu */
.menubar { height: 30px; display: grid; align-items: center; padding-left: 7px; background: #f1f1f1; white-space: nowrap;
  grid-template-columns: 48px 49px 48px 52px 51px 54px 64px 50px 49px 61px 70px 73px 51px 60px 88px 91px 160px 1fr; color: #3a2a1a; }
.menubar .tool { color: #111; }
.ask { color: #5a2a00; padding-left: 0; }
.acct { display: grid; grid-template-columns: 20px 84px 14px 56px 50px auto; align-items: center; height: 24px; background: linear-gradient(#fdfdfd, #f4f4f4); padding-left: 4px; color: #111; border-radius: 3px; }
.acct .caret { margin-left: 0; }
.bell { margin-left: 0; }
.more-top { margin-top: 0; }

/* toolbar 1 */
.toolbar1 { height: 31px; display: flex; gap: 2px; padding-top: 1px; align-items: flex-start; }
.tb-a { width: 151px; height: 25px; display: grid; grid-template-columns: 51px 84px auto; padding-left: 5px; align-items: center; }
.tb-b { width: 549px; height: 25px; display: grid; grid-template-columns: 50px 76px 63px 77px 73px 87px 110px auto; padding-left: 4px; align-items: center; }
.tb-c { width: 663px; height: 25px; display: grid; grid-template-columns: 65px 64px 74px 75px 6px 51px 64px 62px 83px 6px 98px auto; padding-left: 3px; align-items: center; }
.sigma { width: 16px; text-align: center; font: 700 14px/16px "Liberation Sans", sans-serif; margin-right: 1px; }
.tool-3d .ic { margin-left: 2px; }
.tool-3d { gap: 2px; }
.tool-3d .caret { margin-left: 7px; }

/* main */
.main { height: 624px; display: flex; }
.side { width: 254px; display: flex; flex-direction: column; margin-right: 5px; }
.side-head { height: 16px; background: #0053d8; color: #fff; display: flex; align-items: center; padding-right: 3px; }
.side-title { font-size: 12.6px; flex: 1; padding-left: 1px; line-height: 15px; }
.pin { width: 12px; height: 12px; margin-left: 6px; }
.side-btn { height: 22px; display: block; width: 100%; font: 12px/18px "Noto Sans CJK SC", sans-serif; background: #f0f0f0; border: 1px solid #a4a4a4; border-bottom-color: #909090; padding: 0; color: #111; }
.side-btn.gap { margin-top: 1px; }
.side-btn.top1 { margin-top: 1px; }
.treebox { height: 515px; border: 1px solid #a0a0a0; border-width: 1px 1px 2px 2px; background: #fff; display: flex; flex-direction: column; margin: 0 0 0 1px; overflow: hidden; }
.tree-tools { height: 25px; display: flex; gap: 6px; padding: 6px 0 0 5px; }
.tt { width: 16px; height: 16px; }
.tree-body { flex: 1; display: flex; min-height: 0; padding-top: 3px; }
.tree { flex: 1; overflow: hidden; }
.tr { height: 16px; display: flex; align-items: center; padding-left: 7px; }
.chev { width: 10px; height: 10px; }
.stub { width: 6px; border-top: 1px dotted #777; margin-left: 0; }
.tr span { margin-left: 5px; }
.kids { margin-left: 12px; border-left: 1px dotted #777; padding-left: 18px; }
.kid { height: 16px; position: relative; padding-left: 9px; display: flex; }
.kid::before { content: ""; position: absolute; left: 0; top: 8px; width: 9px; border-top: 1px dotted #777; }
.kid::after { content: ""; position: absolute; left: 0; top: 0; height: 100%; border-left: 1px dotted #777; }
.kid:last-child::after { height: 50%; }
.lbl { display: flex; align-items: center; gap: 4px; padding: 0 4px 0 3px; white-space: nowrap; }
.kid.sel .lbl { background: #d3d3d3; }
.vscroll { width: 16px; margin-right: 2px; display: flex; flex-direction: column; background: #f0f0f0; margin-top: -2px; }
.vs-arrow { width: 16px; height: 18px; flex: none; }
.vs-track { flex: 1; }
.vs-thumb { height: 330px; background: #cdcdcd; }

/* work area */
.work { width: 1107px; display: flex; flex-direction: column; }
.row2 { height: 26px; width: 791px; margin: 0 0 1px 5px; display: grid; align-items: center; padding-left: 1px;
  grid-template-columns: 5px 51px 6px 51px 51px 6px 51px 51px 6px 51px 51px 6px 51px 51px 52px 5px 59px 51px 52px 5px auto; }
.row3 { height: 28px; display: flex; }
.r3a { width: 635px; height: 25px; margin-left: 5px; display: grid; align-items: center;
  grid-template-columns: 5px 60px 72px 72px 72px 75px 5px 48px 78px 75px auto; }
.r3b { width: 419px; height: 25px; margin-left: 4px; display: grid; align-items: center; padding-left: 2px;
  grid-template-columns: 7px 51px 51px 63px 87px 75px auto; }
.sel-box { width: 69px; height: 24px; background: #fff; display: flex; align-items: center; justify-content: space-between; padding: 0 3px 0 2px; }
.sel-box .caret { margin: 0 1px 0 0; }
.sel-box.w56 { width: 56px; }
.sel-box.w70 { width: 70px; }
.sel-box.w58 { width: 58px; }
.r3a .tool.active { width: 75px; padding-left: 3px; }
.row4 { height: 27px; display: flex; }
.r4a { width: 202px; height: 25px; margin-left: 4px; display: grid; align-items: center; padding-left: 1px;
  grid-template-columns: 2px 53px 13px 7px 38px 6px auto; }
.r4a .sel-tool { width: 51px; padding-left: 4px; gap: 2px; }
.r4a .caret { margin-left: 0; }
.r4b { width: 30px; height: 25px; margin-left: 205px; display: flex; padding-left: 3px; }
.scene { display: block; width: 1107px; height: 212px; }
.scene-d { font: 400 14px "Liberation Sans", sans-serif; fill: #b8b8b8; }
.scene-num { font: 15px "Liberation Sans", sans-serif; fill: #d8d8d8; }
.snapbar { height: 27px; display: flex; padding: 2px 0 0 212px; }
.snap { width: 675px; height: 25px; display: grid; align-items: center; padding-left: 4px;
  grid-template-columns: 5px 50px 50px 51px 3px 51px 50px 9px 62px 3px 19px 60px 27px 17px 59px 26px 4px 20px 28px 72px auto; }
.snap .tool.active { width: 51px; padding-left: 1px; gap: 4px; }
.lab { color: #888; font-size: 12.5px; }
.txt { white-space: nowrap; }
.total { letter-spacing: .2px; }
.spin { height: 22px; border: 1px solid #777; background: #f4f4f4; display: flex; align-items: center; justify-content: flex-end; color: #888; padding-right: 3px; gap: 5px; border-radius: 1px; }
.spin.w58 { width: 58px; }
.spin.w68 { width: 68px; }
.spin-b { display: flex; flex-direction: column; gap: 5px; }
.spin-b i { width: 0; height: 0; border: 3px solid transparent; }
.spin-b .up { border-bottom: 3px solid #333; border-top: 0; }
.spin-b .dn { border-top: 3px solid #333; border-bottom: 0; }
.check { width: 11px; height: 11px; border: 1px solid #888; background: #fff; }

/* panel */
.panel { height: 303px; display: flex; }
.dots { width: 12px; padding-top: 6px; display: flex; flex-direction: column; }
.dots::after { content: ""; flex: 1; margin: 2px 1px 3px 1px; background: radial-gradient(circle, #c2c2c2 1px, transparent 1.2px) 0 0 / 4px 4px; }
.dots-x { width: 10px; height: 12px; margin-left: 1px; }
.pane { flex: 1; display: flex; flex-direction: column; padding-right: 4px; min-width: 0; }
.editbar { height: 25px; margin: 6px 0 2px 0; padding-left: 6px; display: grid; align-items: center; background: linear-gradient(#fbfbfb, #f2f2f2);
  grid-template-columns: 26px 23px 23px 18px 10px 22px 21px 5px 51px 51px 75px 75px 75px 61px 32px 7px auto; }
.grid-box { height: 267px; flex: none; border: 1px solid #a8a8a8; border-width: 1px 1px 2px 1px; background: #fff; display: flex; flex-direction: column; overflow: hidden; }
.table-wrap { height: 249px; flex: none; overflow: hidden; }
.rebar { border-collapse: collapse; table-layout: fixed; width: 1100px; font-size: 12px; line-height: 13px; }
.c-h { width: 32px; } .c-name { width: 74px; } .c-d { width: 56px; } .c-lv { width: 36px; } .c-no { width: 33px; } .c-fig { width: 201px; }
.c-f { width: 166px; } .c-desc { width: 156px; } .c-len { width: 61px; } .c-cnt { width: 38px; } .c-lap { width: 39px; } .c-loss { width: 49px; }
.c-w { width: 61px; } .c-w2 { width: 61px; } .c-t { width: 37px; }
.rebar th, .rebar td { border: 1px solid #c0c0c0; padding: 0 2px; overflow: hidden; white-space: nowrap; font-weight: 400; }
.rebar thead tr { height: 19px; }
.rebar thead th { text-align: center; background: linear-gradient(#fff, #ececec); line-height: 16px; }
.rebar thead th.hot { background: linear-gradient(#ffe4ae, #fbcb74); color: #6b0a5a; }
.rebar tbody th { text-align: center; background: linear-gradient(#fff, #e8e8e8); font: 12px/13px "Liberation Sans", sans-serif; }
.rebar tbody th.cur { background: #ffd38a; color: #6b0a5a; }
.rebar tbody td { background: #ccffd5; }
.rebar .blank-row td { background: #fff; }
.r29 { height: 29px; } .r41 { height: 41px; } .r42 { height: 42px; } .r33 { height: 33px; } .r20 { height: 20px; }
.rebar td.nm { white-space: normal; word-break: break-all; line-height: 12px; padding: 0 2px; }
.rebar td.nm .m { line-height: 0; }
.rebar td.num { font: 11.5px/13px "Liberation Sans", sans-serif; letter-spacing: -.2px; }
.rebar td.tight-l { line-height: 12px; letter-spacing: .7px; }
.rebar td.ctr { text-align: center; font-size: 11px; }
.rebar td.bl { border-left: 1px solid #000; }
.rebar td.focus { background: #aeeadb; outline: 1px dotted #602050; outline-offset: -1px; }
.rebar td.fig { padding: 0; }
.figs { display: block; width: 200px; }
.r29 .figs { height: 28px; } .r41 .figs { height: 40px; } .r42 .figs { height: 41px; } .r33 .figs { height: 32px; }
.bar { stroke: #000; stroke-width: 2; fill: none; }
.rd { font: 11px "Liberation Sans", sans-serif; fill: #f00; }
.bk { font: 11px "Liberation Sans", sans-serif; fill: #111; }
.rebar .cut { padding-left: 2px; }
.hscroll { height: 15px; flex: none; display: flex; background: #f0f0f0; }
.hs-arrow { width: 18px; height: 15px; }
.hs-thumb { width: 700px; background: #c8c8c8; }

/* status */
.status { height: 20px; display: grid; grid-template-columns: 148px 78px 98px 48px 914px 70px; gap: 2px; padding-bottom: 1px; }
.status > div { background: #f1f1f1; border: 1px solid #dcdcdc; line-height: 17px; padding-left: 1px; white-space: nowrap; }
.status .m-cell { font: 12px/17px "Liberation Mono", monospace; letter-spacing: -1.2px; }

/* taskbar */
.taskbar { height: 40px; display: grid; grid-template-columns: 48px 344px 48px 51px 52px 52px 22px repeat(6, 49px) 48px 407px; background: #04151b; color: #eee; }
.tk-start { background: #000; display: flex; align-items: center; justify-content: center; }
.tk16 { width: 16px; height: 16px; }
.tk-search { background: #333; display: flex; align-items: center; padding-left: 9px; }
.tk-cortana { width: 21px; height: 21px; }
.tk-ph { font-size: 14px; color: #8a8a8a; margin-left: 6px; flex: 1; }
.tk-mic { width: 14px; height: 18px; margin-right: 15px; }
.tk-app { display: flex; align-items: center; justify-content: center; position: relative; }
.tk20 { width: 20px; height: 16px; }
.tk22 { width: 22px; height: 22px; }
.tk24 { width: 24px; height: 24px; }
.tk-bell { width: 13px; height: 14px; position: absolute; left: 26px; top: 5px; }
.tk-sep { display: flex; align-items: center; padding-left: 5px; }
.tk-sep i { width: 2px; height: 16px; background: #3a4448; }
.tk-run::after { content: ""; position: absolute; left: 4px; right: 4px; bottom: 0; height: 2px; background: #76b9ed; }
.tk-active { background: #3a4a50; border-bottom: 2px solid #76b9ed; }
.tk-tray { display: grid; grid-template-columns: 67px 35px 21px 26px 22px 24px 32px 28px 33px 78px 16px; align-items: center; }
.tk-tsep { width: 1px; height: 16px; background: #555; margin-left: 53px; }
.tk-link { font-size: 12px; color: #ddd; }
.t12 { width: 12px; height: 8px; }
.t16 { width: 16px; height: 14px; }
.t22 { width: 22px; height: 16px; }
.t-s { height: 18px; }
.t-n { height: 16px; }
.tk-a { font: 18px/20px "Liberation Sans", sans-serif; color: #fff; }
.tk-clock { display: flex; flex-direction: column; align-items: center; width: 60px; line-height: 18px; color: #f0f0f0; }
```
